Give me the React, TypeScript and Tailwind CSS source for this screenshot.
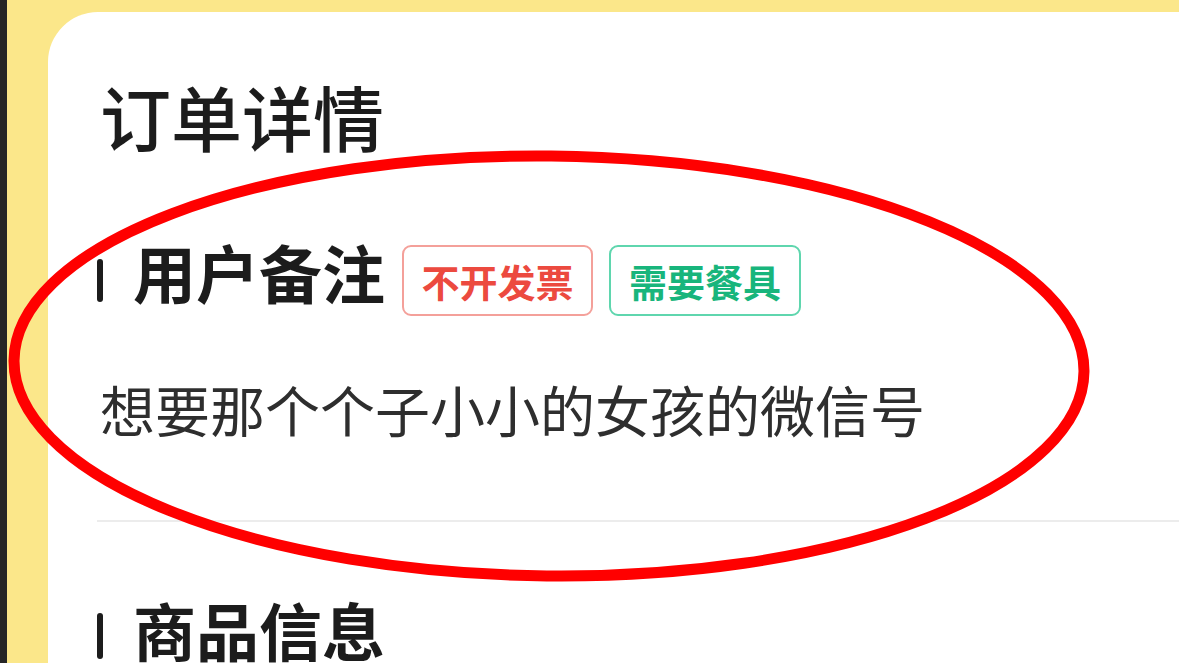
export default function App() {
  const cjk = { fontFamily: '"Noto Sans CJK SC", "Noto Sans", sans-serif' };
  return (
    <div className="relative flex h-[663px] w-[1179px] overflow-hidden bg-[#fbe78a]" style={cjk}>
      <div className="w-[7px] shrink-0 bg-[#262626]" />
      <div className="flex flex-1 flex-col pl-[41px] pt-[12px]">
        <div className="flex-1 rounded-tl-[50px] bg-white pl-[49px] pt-[68px]">
          <h1 className="pl-[3px] text-[71px] font-medium leading-none text-[#1c1c1c]">订单详情</h1>

          <div className="mt-[88px] flex items-center">
            <div className="h-[43px] w-[6px] rounded-sm bg-[#1c1c1c]" />
            <h2 className="mb-[20px] ml-[30px] text-[63px] font-bold leading-none text-[#1c1c1c]">用户备注</h2>
            <span className="ml-[17px] flex h-[71px] w-[191px] items-center justify-center rounded-[9px] border-2 border-[#f4a09a] text-[38px] font-bold text-[#ec4a3f]">
              不开发票
            </span>
            <span className="ml-[16px] flex h-[71px] w-[192px] items-center justify-center rounded-[9px] border-2 border-[#5fd6ae] text-[38px] font-bold text-[#18b57c]">
              需要餐具
            </span>
          </div>

          <p className="mt-[59px] pl-[3px] text-[55px] leading-none text-[#2e2e2e]">想要那个个子小小的女孩的微信号</p>

          <div className="mt-[84px] h-[2px] bg-[#ececec]" />

          <div className="mt-[75px] flex items-center">
            <div className="h-[46px] w-[6px] rounded-sm bg-[#1c1c1c]" />
            <h2 className="mb-[14px] ml-[30px] text-[63px] font-bold leading-none text-[#1c1c1c]">商品信息</h2>
          </div>
        </div>
      </div>

      <svg className="pointer-events-none absolute left-0 top-0" width="1179" height="663" viewBox="0 0 1179 663">
        <ellipse cx="549" cy="366" rx="535" ry="210" fill="none" stroke="#ff0000" strokeWidth="11" transform="rotate(0.6 549 366)" />
      </svg>
    </div>
  );
}
